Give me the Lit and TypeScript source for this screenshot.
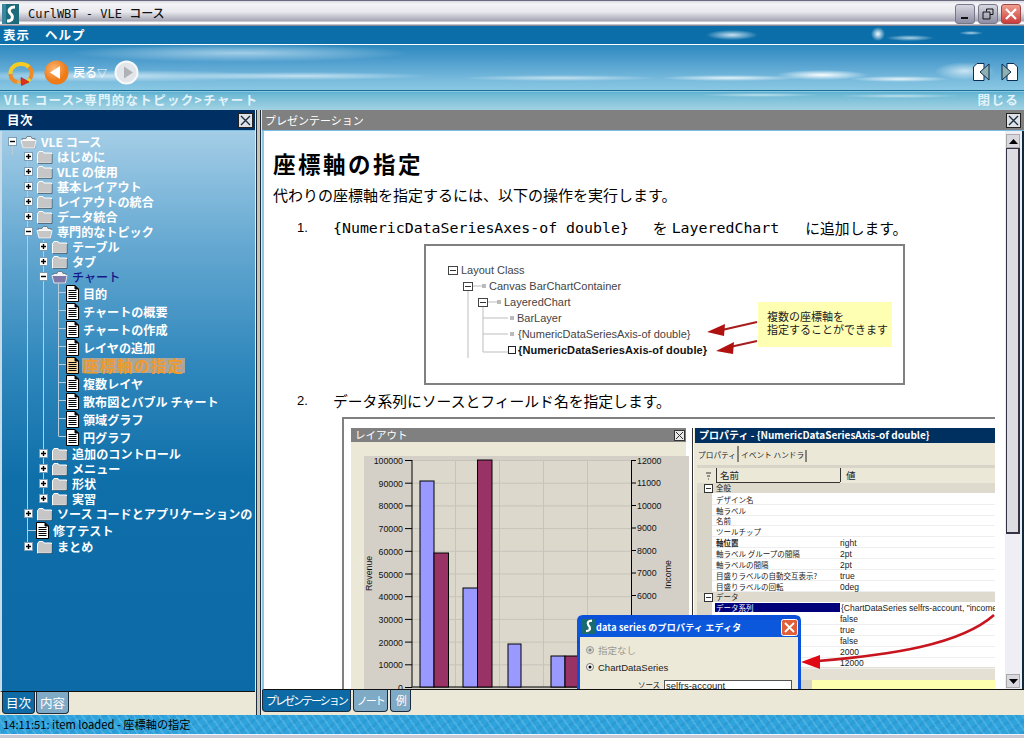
import { LitElement, html, css, svg } from "lit";
import { customElement } from "lit/decorators.js";

type Row = { t: string; d: number; k: "f" | "d"; e?: string; open?: boolean; cur?: boolean; sel?: boolean };
const F = (t: string, d: number, e = "+", x: Partial<Row> = {}): Row => ({ t, d, k: "f", e, ...x });
const D = (t: string, d: number, x: Partial<Row> = {}): Row => ({ t, d, k: "d", ...x });
const TREE: Row[] = [
  F("VLE コース", 0, "-", { open: true }),
  F("はじめに", 1), F("VLE の使用", 1), F("基本レイアウト", 1), F("レイアウトの統合", 1), F("データ統合", 1),
  F("専門的なトピック", 1, "-", { open: true }),
  F("テーブル", 2), F("タブ", 2),
  F("チャート", 2, "-", { open: true, cur: true }),
  D("目的", 3), D("チャートの概要", 3), D("チャートの作成", 3), D("レイヤの追加", 3),
  D("座標軸の指定", 3, { sel: true }),
  D("複数レイヤ", 3), D("散布図とバブル チャート", 3), D("領域グラフ", 3), D("円グラフ", 3),
  F("追加のコントロール", 2), F("メニュー", 2), F("形状", 2), F("実習", 2),
  F("ソース コードとアプリケーションの", 1), D("修了テスト", 1), F("まとめ", 1),
];

const expander = (e: string) => html`<svg class="exp" width="9" height="9" viewBox="0 0 9 9">
  <rect x=".5" y=".5" width="8" height="8" fill="#fff" stroke="#7d9db5"/>
  <path d="M2 4.5H7${e === "+" ? "M4.5 2V7" : ""}" stroke="#000" stroke-width="1.4"/></svg>`;
const folder = (r: Row) => {
  const fill = r.cur ? "#7d78a8" : "#c6c6c6";
  return r.open
    ? html`<svg class="ico" width="17" height="14" viewBox="0 0 17 14">
        <path d="M2 3.5H6L7 1.5H11L12 3.5H15V13H3Z" fill="#f2f2f2" stroke="#5a6e7c" stroke-width=".8"/>
        <path d="M1 5.5H16L14.5 13H3Z" fill="${fill}" stroke="#fff" stroke-width=".8"/></svg>`
    : html`<svg class="ico" width="17" height="14" viewBox="0 0 17 14">
        <path d="M1.5 4V13H15.5V3H8L7 1.5H3L2 3Z" fill="${fill}" stroke="#fff" stroke-width="1"/>
        <path d="M2 13.4H16V4" fill="none" stroke="#2e4658" stroke-width=".8"/></svg>`;
};
const doc = (sel?: boolean) => html`<svg class="ico" width="13" height="17" viewBox="0 0 13 17">
  <path d="M.5 .5H9L12.5 4V16.5H.5Z" fill="${sel ? "#f9d79c" : "#fff"}" stroke="#000"/>
  <path d="M9 .5V4H12.5" fill="#000" stroke="#000"/>
  <path d="M2.5 5.5H10.5M2.5 7.5H10.5M2.5 9.5H10.5M2.5 11.5H10.5M2.5 13.5H10.5" stroke="#000" stroke-width="1"/></svg>`;
const closeBtn = html`<span class="xbtn"><svg width="11" height="11" viewBox="0 0 11 11"><path d="M1 1L10 10M10 1L1 10" stroke="#1e2d40" stroke-width="1.4"/></svg></span>`;
const sLogo = (x = 0, y = 0, s = 1) => svg`<g transform="translate(${x} ${y}) scale(${s})">
  <path d="M12 2C7 2 5 5 7 8C9 10 10 11 9 14C8 16 6 16 4 16" fill="none" stroke="#fff" stroke-width="3"/></g>`;

const ROWS2 = [
  ["デザイン名", "", 499], ["軸ラベル", "", 510], ["名前", "", 520], ["ツールチップ", "", 531],
  ["軸位置", "right", 542, 1], ["軸ラベル グループの間隔", "2pt", 553], ["軸ラベルの間隔", "2pt", 564],
  ["目盛りラベルの自動交互表示?", "true", 575], ["目盛りラベルの回転", "0deg", 586],
] as [string, string, number, number?][];

const FIG1 = svg`
  <rect x="425" y="245" width="479" height="139" fill="#fff" stroke="#808080" stroke-width="2"/>
  <g fill="none" stroke="#bdbdbd"><path d="M468 291V358M483 307V352H508M483 318H508M483 334H508M473 286H483M488 302H498"/></g>
  <g fill="#fff" stroke="#444"><rect x="448.500" y="266.500" width="9" height="8"/><rect x="463.500" y="282.500" width="9" height="8"/><rect x="478.500" y="298.500" width="9" height="8"/></g>
  <path d="M450 270.500H456M465 286.500H471M480 302.500H486" stroke="#333"/>
  <g fill="#bbb"><rect x="482" y="284" width="4" height="4"/><rect x="497" y="300" width="4" height="4"/><rect x="510" y="316" width="4" height="4"/><rect x="510" y="332" width="4" height="4"/></g>
  <rect x="508.500" y="346.500" width="7" height="7" fill="#fff" stroke="#222"/>
  <g class="f1t">
    <text x="461" y="274">Layout Class</text><text x="489" y="290">Canvas BarChartContainer</text>
    <text x="504" y="306">LayeredChart</text><text x="517" y="322">BarLayer</text>
    <text x="518" y="338">{NumericDataSeriesAxis-of double}</text>
    <text class="f1b" x="518" y="354">{NumericDataSeriesAxis-of double}</text>
  </g>
  <rect x="758" y="302" width="134" height="45" fill="#ffffb4"/>
  <text class="f1n" x="767" y="321">複数の座標軸を</text><text class="f1n" x="767" y="334">指定することができます</text>
  <path d="M757 322L722 330M757 341L730 347" stroke="#a81c1c" stroke-width="2"/>
  <path d="M707 332L725 324L724 336ZM716 351L734 342L733 354Z" fill="#b01010"/>`;

const Y0 = 687, SP = 22.7;
const bar = (x: number, w: number, top: number, c: string) => svg`<rect x="${x}" y="${top}" width="${w}" height="${Y0 - top}" fill="${c}" stroke="#000" stroke-width="1"/>`;
const leftTicks = [100000, 90000, 80000, 70000, 60000, 50000, 40000, 30000, 20000, 10000, 0];
const rightTicks = [12000, 11000, 10000, 9000, 8000, 7000, 6000];
const FIG2 = svg`
  <rect x="342" y="417" width="653" height="273" fill="#fff"/>
  <path d="M343 690V418H995" fill="none" stroke="#808080" stroke-width="2"/>
  <rect x="351" y="428" width="335" height="262" fill="#ebe8d8"/>
  <rect x="351" y="428" width="335" height="14" fill="#808080"/>
  <text class="wt" x="355" y="439">レイアウト</text>
  <rect x="674.500" y="430.500" width="10" height="10" fill="#e8e8e8" stroke="#333"/>
  <path d="M676 432L683 439M683 432L676 439" stroke="#333"/>
  <rect x="364" y="456" width="325" height="234" fill="#d4d0c8"/>
  <rect x="412" y="460" width="219" height="227" fill="#dcd8cc"/>
  <g stroke="#c6c3ba">
    ${leftTicks.map((_, i) => svg`<path d="M412 ${460.500 + i * SP}H631"/>`)}
    <path d="M455.500 460V687M499.500 460V687M543.500 460V687M587.500 460V687"/>
  </g>
  ${leftTicks.map((t, i) => svg`<text class="tk" x="403" y="${464 + i * SP}" text-anchor="end">${t}</text><path d="M405 ${460.500 + i * SP}H412" stroke="#000"/>`)}
  ${rightTicks.map((t, i) => svg`<text class="tk" x="637" y="${463.500 + i * 22.5}">${t}</text><path d="M631 ${460.500 + i * 22.5}H636" stroke="#000"/>`)}
  <path d="M412 460V687H631M631.500 460V687" fill="none" stroke="#000" stroke-width="1"/>
  ${bar(420, 14, 481, "#9999ff")}${bar(434, 14.500, 553, "#993366")}
  ${bar(463, 14.500, 588, "#9999ff")}${bar(477.500, 14.500, 460, "#993366")}
  ${bar(508, 13, 644, "#9999ff")}
  ${bar(551, 14, 656, "#9999ff")}${bar(565, 15, 656, "#993366")}
  <text class="tk" transform="translate(372 591) rotate(-90)">Revenue</text>
  <text class="tk" transform="translate(671 589) rotate(-90)">Income</text>

  <rect x="692" y="417" width="303" height="273" fill="#fff"/>
  <path d="M692 418H995" stroke="#808080" stroke-width="2"/>
  <path d="M692.500 428V690" stroke="#333"/>
  <rect x="694" y="428" width="301" height="262" fill="#ebe8d8"/>
  <rect x="695" y="428" width="300" height="15" fill="#00305f"/>
  <text class="wb" x="699" y="439">プロパティ - {NumericDataSeriesAxis-of double}</text>
  <text class="t8" x="698" y="458">プロパティ</text><text class="t8" x="741" y="458">イベント ハンドラ</text>
  <path d="M738 446V462M806 450V462" stroke="#222"/>
  <rect x="697" y="465" width="298" height="225" fill="#d8d5c8"/>
  <rect x="712" y="493" width="283" height="174" fill="#fff"/>
  <rect x="697" y="468" width="298" height="15" fill="#ebe8d8"/>
  <path d="M716.500 468V482M840.500 468V482M716 482.500H840" stroke="#333"/>
  <path d="M706 473H711M707 476H710M708 479H709" stroke="#333"/>
  <text class="s" x="720" y="479">名前</text><text class="s" x="846" y="479">値</text>
  <rect x="697" y="483" width="298" height="10" fill="#dedbce"/>
  <rect x="697" y="592" width="298" height="10" fill="#dedbce"/>
  <rect x="712" y="602" width="283" height="65" fill="#fff"/>
  <rect x="712" y="667" width="283" height="13" fill="#e4e1d4"/>
  <rect x="812" y="680" width="183" height="10" fill="#ffffb0"/>
  <g fill="#fff" stroke="#333"><rect x="704.500" y="484.500" width="8" height="8"/><rect x="704.500" y="593.500" width="8" height="8"/></g>
  <path d="M706 488.500H711M706 597.500H711" stroke="#333"/>
  <text class="xs" x="716" y="491">全般</text><text class="xs" x="716" y="600">データ</text>
  ${ROWS2.map(([a, b, y, bold]) => svg`<path d="M712 ${y + 5.500}H995" stroke="#eeeeee"/>
    <text class="xs" x="716" y="${y + 3.500}" font-weight="${bold ? 700 : 400}">${a}</text>
    <text class="xv" x="840" y="${y + 3.500}">${b}</text>`)}
  <rect x="715" y="603" width="125" height="9" fill="#00007a"/>
  <text class="xs" x="716" y="611" style="fill:#fff">データ系列</text>
  <text class="xv" x="841" y="611">{ChartDataSeries selfrs-account, "income</text>
  ${["false", "true", "false", "2000", "12000"].map((v, i) => svg`<text class="xv" x="840" y="${622 + i * 11}">${v}</text><path d="M712 ${624.500 + i * 11}H995" stroke="#eeeeee"/>`)}

  <path d="M994 615C960 645 890 655 818 661" fill="none" stroke="#c8141e" stroke-width="2.500"/>
  <path d="M801 662L820 655L820 669Z" fill="#e00a14"/>

  <path d="M577 690V621Q577 615 583 615H795Q801 615 801 621V690Z" fill="#0a50d8"/>
  <path d="M577 620H801V637H577Z" fill="#0d5fe0" opacity=".5"/>
  <rect x="580" y="637" width="218" height="53" fill="#ece9d8"/>
  <rect x="582" y="619" width="13" height="15" fill="#1a6a72"/>
  ${sLogo(583, 619, .75)}
  <text class="wb dlg" x="596" y="631">data series のプロパティ エディタ</text>
  <rect x="781.500" y="619.500" width="16" height="16" rx="2" fill="#e0603c" stroke="#fff"/>
  <path d="M785 623L794 632M794 623L785 632" stroke="#fff" stroke-width="1.800"/>
  <circle cx="590" cy="650" r="3.500" fill="#dcdcd4" stroke="#999"/><circle cx="590" cy="650" r="1.500" fill="#888"/>
  <circle cx="590" cy="667" r="3.500" fill="#fff" stroke="#777"/><circle cx="590" cy="667" r="1.500" fill="#000"/>
  <text class="s" x="598" y="654" style="fill:#9a9a92">指定なし</text>
  <text class="lb" x="598" y="671">ChartDataSeries</text>
  <text class="t7" x="638" y="688">ソース</text>
  <rect x="664.500" y="680.500" width="127" height="12" fill="#fff" stroke="#555"/>
  <text class="lb" x="666" y="689">selfrs-account</text>`;

@customElement("app-root")
export class AppRoot extends LitElement {
  static styles = css`
    :host { display: block; width: 1024px; height: 738px; overflow: hidden; font-family: "Noto Sans CJK JP", sans-serif; background: #ebe8d8; }
    .win { display: flex; flex-direction: column; height: 738px; }
    .title { height: 26px; flex: none; display: flex; align-items: center; padding: 2px 3px 0 2px; box-sizing: border-box;
      border-top: 1px solid #6c6c80; border-bottom: 1px solid #88889a;
      background: linear-gradient(#d9d9e2 0, #f4f4f8 12%, #e8e8ee 45%, #a7a6b4 82%, #fff 90%, #fff 94%, #a0a0ae 100%); }
    .title .logo { display: block; }
    .title .cap { margin-left: 9px; font: 500 12px/1 "DejaVu Sans Mono", "Noto Sans CJK JP", monospace; color: #111; }
    .title .sp { flex: 1; }
    .wbtn { width: 20px; height: 20px; margin-left: 3px; border-radius: 3px; display: flex; align-items: center; justify-content: center;
      border: 1px solid #77778a; box-sizing: border-box; background: linear-gradient(#d8d8e2, #8e8ea4); }
    .wbtn.close { background: linear-gradient(#f0a090, #cc3c3c); border-color: #a04848; }
    .sky { flex: none; height: 84px; display: flex; flex-direction: column; color: #fff;
      background:
        radial-gradient(ellipse 26px 5px at 732px 9px, #e6f4fbdd, transparent),
        radial-gradient(ellipse 7px 7px at 878px 8px, #f4fbff, transparent),
        radial-gradient(ellipse 24px 3px at 910px 12px, #d6ebf6cc, transparent),
        radial-gradient(ellipse 12px 2px at 971px 7px, #d6ebf6cc, transparent),
        radial-gradient(ellipse 46px 5px at 822px 49px, #fbfeffff, transparent),
        radial-gradient(ellipse 70px 3px at 730px 52px, #eef8fcee, transparent),
        radial-gradient(ellipse 50px 3px at 900px 53px, #f0f8fcee, transparent),
        radial-gradient(ellipse 30px 9px at 965px 45px, #eef8fcbb, transparent),
        radial-gradient(ellipse 100px 3px at 560px 52px, #eef8fcaa, transparent),
        radial-gradient(ellipse 130px 4px at 300px 50px, #eef8fcaa, transparent),
        radial-gradient(ellipse 170px 9px at 240px 27px, #d6ecf8aa, transparent),
        radial-gradient(ellipse 170px 6px at 110px 50px, #e4f3fabb, transparent),
        radial-gradient(ellipse 60px 2px at 760px 69px, #e4f4f8aa, transparent),
        radial-gradient(ellipse 60px 2px at 900px 70px, #e4f4f8aa, transparent),
        linear-gradient(#0b6ea8 0, #0d6fa9 21%, #2b88bd 22%, #4c9ccd 40%, #79bbdd 64%, #8ccae4 78%, #5aaed0 78.500%, #6db9d4 81%, #a2d2e2 100%); }
    .menu { height: 19px; flex: none; display: flex; gap: 15px; padding: 0 3px; box-sizing: border-box; border-bottom: 1px solid #fff;
      font: 700 12.500px/18px "Noto Sans CJK JP", sans-serif; letter-spacing: 1px; }
    .tools { height: 46px; flex: none; box-sizing: border-box; display: flex; align-items: center; padding: 9px 6px 0 8px; border-bottom: 1px solid #1a6d96; }
    .tools .ref { display: block; margin-top: 3px; }
    .tools .back { margin-left: 10px; display: block; }
    .tools .blabel { margin-left: 4px; width: 33px; white-space: nowrap; font: 500 12px/1 "Noto Sans CJK JP", sans-serif; color: #fff; }
    .tools .blabel small { font-size: 10px; }
    .tools .fwd { margin-left: 8px; display: block; }
    .tools .sp { flex: 1; }
    .tools .pg { margin-left: 11px; display: block; }
    .crumb { height: 19px; flex: none; display: flex; justify-content: space-between; padding: 0 5px 0 4px;
      font: 700 12.500px/17px "Noto Sans CJK JP", sans-serif; letter-spacing: 1.300px; color: #e4f3fa; }
    .panes { flex: 1; min-height: 0; display: grid; grid-template-columns: 255px 7px 1fr; background: #ebe8d8; }
    .split { border-left: 1px solid #1c2c3c; border-right: 1px solid #1c2c3c; background: #c9c6b8; width: 3px; margin-left: 1px; }
    .pane { display: flex; flex-direction: column; min-width: 0; min-height: 0; }
    .head { height: 20px; flex: none; display: flex; align-items: center; justify-content: space-between; padding: 0 2px 0 7px; box-sizing: border-box; color: #fff; font: 700 12.500px/1 "Noto Sans CJK JP", sans-serif; letter-spacing: .6px; }
    .head.nav { background: #002f63; }
    .head.gray { background: #808080; font: 400 11px/1 "Noto Sans CJK JP", sans-serif; padding-left: 3px; padding-right: 3px; letter-spacing: 0; }
    .xbtn { width: 15px; height: 15px; display: flex; align-items: center; justify-content: center; background: #dfe3e8; border: 1px solid #222; box-sizing: border-box; }
    .rule { height: 1px; flex: none; background: #79bde4; }
    .tree { position: relative; height: 561px; flex: none; overflow: hidden; padding-top: 3px; box-sizing: border-box; border-left: 2px solid #c8dbe8;
      border-bottom: 1px solid #111; background: linear-gradient(#a4cde6 0, #66a9d2 20%, #2f87bc 42%, #0f6fa9 62%, #0c6aa6 100%); }
    .guides { position: absolute; left: -2px; top: 0; }
    .row { position: relative; display: flex; align-items: center; height: 15px; white-space: nowrap; color: #fff;
      font: 700 12.100px/15px "Noto Sans CJK JP", sans-serif; }
    .row.doc { height: 18px; }
    .row .exp { flex: none; margin-right: 3px; }
    .row .ico { flex: none; margin-right: 4px; }
    .row .cur { color: #17178c; font-weight: 500; }
    .row .sel { color: #ee9a2c; background: #a9a69e; padding: 0 1px; margin-left: -1px; font-size: 15.500px; letter-spacing: 1.400px; line-height: 15px; }
    .tabs { flex: 1; display: flex; align-items: flex-start; padding-left: 2px; gap: 1px; }
    .tab { height: 22px; padding: 0 3px; border-radius: 0 0 4px 4px; border: 1px solid #1c2c3c; border-top: none; box-sizing: border-box; color: #fff; background: #7faac6;
      font: 400 12.500px/21px "Noto Sans CJK JP", sans-serif; }
    .tab.on { background: #0d6aa5; }
    .tabs.r { padding-left: 0; gap: 2px; }
    .tabs.r .tab { font-size: 11px; letter-spacing: -2px; }
    .tabs.r .tab:last-child { padding: 0 5px; }
    .main { display: flex; background: #fff; height: 559px; flex: none; border-left: 2px solid #8ec4e4; border-bottom: 1px solid #111; box-sizing: border-box; }
    .doc-body { flex: 1; min-width: 0; overflow: hidden; padding: 18px 0 0 9px; color: #000; }
    h1 { margin: 0; font: 700 22.500px/28px "Noto Sans CJK JP", sans-serif; letter-spacing: 2.500px; }
    p { margin: 6px 0 0; font: 400 15px/24px "Noto Sans CJK JP", sans-serif; letter-spacing: 0; }
    .li { display: flex; margin: 9px 0 0 24px; font: 400 14.800px/24px "Noto Sans CJK JP", sans-serif; white-space: nowrap; }
    .li.two { margin-top: 4px; }
    .li .n { width: 36px; flex: none; font: 400 13px/24px "Liberation Sans", sans-serif; }
    .mono { font: 400 14.900px/24px "DejaVu Sans Mono", monospace; }
    .m1 { margin-left: 24px; } .m2 { margin-left: 4px; } .m3 { margin-left: 26px; }
    .fig1 { display: block; margin: 4px 0 0 151px; }
    .fig2 { display: block; margin: 4px 0 0 69px; }
    svg text { font-family: "Noto Sans CJK JP", sans-serif; }
    .f1t text { font: 11px "Liberation Sans", sans-serif; fill: #444; }
    .f1t text.f1b { font-weight: 700; fill: #111; letter-spacing: .1px; }
    .f1n { font-size: 11px; fill: #222; }
    .wt { font-size: 10.500px; fill: #fff; }
    .wb { font-size: 10px; font-weight: 700; fill: #fff; }
    .wb.dlg { font-size: 9px; letter-spacing: .2px; }
    .tk { font-size: 8.800px; fill: #111; font-family: "Liberation Sans", sans-serif !important; }
    .s { font-size: 9.500px; fill: #222; }
    .t8 { font-size: 7.700px; fill: #222; }
    .t7 { font-size: 7.500px; fill: #222; }
    .xs { font-size: 7.500px; fill: #222; }
    .xv { font-size: 8.500px; fill: #222; font-family: "Liberation Sans", sans-serif !important; }
    .lb { font-size: 9.500px; fill: #222; font-family: "Liberation Sans", sans-serif !important; }
    .scroll { width: 19px; flex: none; box-sizing: border-box; display: flex; flex-direction: column; align-items: stretch; padding: 3px 2px 1px 1px; background: #eeeef4; border-right: 2px solid #10283c; }
    .sb { height: 14px; flex: none; display: flex; align-items: center; justify-content: center; background: #d8d8de; border: 1px solid #aaa; box-sizing: border-box; }
    .thumb { height: 386px; flex: none; background: #dcdce2; border: 1px solid #334; border-right-width: 2px; border-bottom-width: 2px; box-sizing: border-box; }
    .track { flex: 1; }
    .status { flex: none; height: 19px; box-sizing: border-box; padding-left: 3px; color: #000; font: 400 11.200px/18px "Noto Sans CJK JP", sans-serif;
      background:
        repeating-linear-gradient(55deg, #ffffff22 0 2px, transparent 2px 7px),
        repeating-linear-gradient(-40deg, #0a6aa822 0 3px, transparent 3px 9px),
        #2fa3dc; }
    .foot { flex: none; height: 4px; background: linear-gradient(#f4f4f8 0 1px, #c9c9d6 1px); }
    .tabzone { height: 23px; flex: none; display: flex; }
  `;

  render() {
    return html`<div class="win">
      <div class="title">
        <svg class="logo" width="17" height="20" viewBox="0 0 17 20"><rect width="17" height="20" fill="#1d6b7a"/><rect x="0" y="0" width="4" height="20" fill="#3a86a0"/>${sLogo(1, 1)}</svg>
        <span class="cap">CurlWBT - VLE コース</span>
        <span class="sp"></span>
        <span class="wbtn"><svg width="12" height="12" viewBox="0 0 12 12"><rect x="2" y="9" width="7" height="2" fill="#111"/></svg></span>
        <span class="wbtn"><svg width="12" height="12" viewBox="0 0 12 12"><path d="M4.500 3.500V1H11V6.500H8M1 4H8V11H1Z" fill="none" stroke="#111"/></svg></span>
        <span class="wbtn close"><svg width="14" height="14" viewBox="0 0 14 14"><path d="M2 2L12 12M12 2L2 12" stroke="#fff" stroke-width="2.200"/></svg></span>
      </div>
      <div class="sky">
        <div class="menu"><span>表示</span><span>ヘルプ</span></div>
        <div class="tools">
          <svg class="ref" width="26" height="25" viewBox="0 0 26 25">
            <path d="M2.500 13C2 7 7 3 13 3C16 3 19 4 21 6" fill="none" stroke="#f6cb22" stroke-width="4"/>
            <path d="M2.500 13C2.500 17 5 20 9 21" fill="none" stroke="#ef8a24" stroke-width="4"/>
            <path d="M21 6C24 9 24.500 14 22 18" fill="none" stroke="#ef8a24" stroke-width="4"/>
            <path d="M22 18C20.500 20 19 21 17 21.500" fill="none" stroke="#f6cb22" stroke-width="3.500"/>
            <path d="M9 21H14" fill="none" stroke="#f4a83a" stroke-width="3"/>
            <path d="M13 16.500L13.500 24.500L21 21Z" fill="#e03020" stroke="#a01010" stroke-width=".6"/>
          </svg>
          <svg class="back" width="25" height="25" viewBox="0 0 25 25">
            <defs><radialGradient id="og" cx=".4" cy=".35"><stop offset="0" stop-color="#fbb877"/><stop offset="1" stop-color="#ee7a18"/></radialGradient></defs>
            <circle cx="12.500" cy="12.500" r="12" fill="url(#og)"/><path d="M6 12.500L16 6V19Z" fill="#fff"/></svg>
          <span class="blabel">戻る<small>▽</small></span>
          <svg class="fwd" width="25" height="25" viewBox="0 0 25 25"><circle cx="12.500" cy="12.500" r="11" fill="#e2e6ea" stroke="#f6f8fa" stroke-width="2"/><path d="M19 12.500L10 6.500V18.500Z" fill="#aeb2b6"/></svg>
          <span class="sp"></span>
          <svg class="pg" width="17" height="18" viewBox="0 0 17 18"><path d="M.5 4L4 .5H11V17.500H.5Z" fill="#fff" stroke="#0c2c50"/><path d="M16 1V17L7 9Z" fill="#8fb0b0" stroke="#0c2c50"/></svg>
          <svg class="pg" width="17" height="18" viewBox="0 0 17 18"><path d="M6 .5H13L16.500 4V17.500H6Z" fill="#fff" stroke="#0c2c50"/><path d="M1 1V17L10 9Z" fill="#8fb0b0" stroke="#0c2c50"/></svg>
        </div>
        <div class="crumb"><span>VLE コース&gt;専門的なトピック&gt;チャート</span><span>閉じる</span></div>
      </div>
      <div class="panes">
        <div class="pane">
          <div class="head nav"><span>目次</span>${closeBtn}</div>
          <div class="rule"></div>
          <div class="tree">
            <svg class="guides" width="255" height="561" viewBox="0 131 255 561">
              <path d="M27.500 150V546M12.500 146V155M43.500 240V497M58.500 283V436M58.500 292.500H66M58.500 310.500H66M58.500 328.500H66M58.500 346.500H66M58.500 364.500H66M58.500 382.500H66M58.500 400.500H66M58.500 418.500H66M58.500 436.500H66M27.500 530.500H36" fill="none" stroke="#b9ccd8"/>
            </svg>
            ${TREE.map((r) => html`<div class="row ${r.k === "d" ? "doc" : ""}" style="padding-left:${r.k === "d" ? 19 + 15 * r.d : r.d === 0 ? 6 : 7 + 15 * r.d}px">
              ${r.k === "f" ? html`${expander(r.e!)}${folder(r)}` : doc(r.sel)}
              <span class="${r.cur ? "cur" : r.sel ? "sel" : ""}">${r.t}</span>
            </div>`)}
          </div>
          <div class="tabzone"><div class="tabs"><span class="tab on">目次</span><span class="tab">内容</span></div></div>
        </div>
        <div class="split"></div>
        <div class="pane">
          <div class="head gray"><span>プレゼンテーション</span>${closeBtn}</div>
          <div class="rule"></div>
          <div class="main">
            <div class="doc-body">
              <h1>座標軸の指定</h1>
              <p>代わりの座標軸を指定するには、以下の操作を実行します。</p>
              <div class="li"><span class="n">1.</span><span class="mono">{NumericDataSeriesAxes-of double}</span><span class="m1">を</span><span class="mono m2">LayeredChart</span><span class="m3">に追加します。</span></div>
              <svg class="fig1" width="481" height="141" viewBox="424 244 481 141">${FIG1}</svg>
              <div class="li two"><span class="n">2.</span><span>データ系列にソースとフィールド名を指定します。</span></div>
              <svg class="fig2" width="653" height="273" viewBox="342 417 653 273">${FIG2}</svg>
            </div>
            <div class="scroll">
              <span class="sb"><svg width="9" height="5" viewBox="0 0 9 5"><path d="M4.500 0L9 5H0Z" fill="#000"/></svg></span>
              <span class="thumb"></span>
              <span class="track"></span>
              <span class="sb"><svg width="9" height="5" viewBox="0 0 9 5"><path d="M4.500 5L9 0H0Z" fill="#000"/></svg></span>
            </div>
          </div>
          <div class="tabzone"><div class="tabs r"><span class="tab on">プレゼンテーション</span><span class="tab">ノート</span><span class="tab">例</span></div></div>
        </div>
      </div>
      <div class="status">14:11:51: item loaded - 座標軸の指定</div>
      <div class="foot"></div>
    </div>`;
  }
}
